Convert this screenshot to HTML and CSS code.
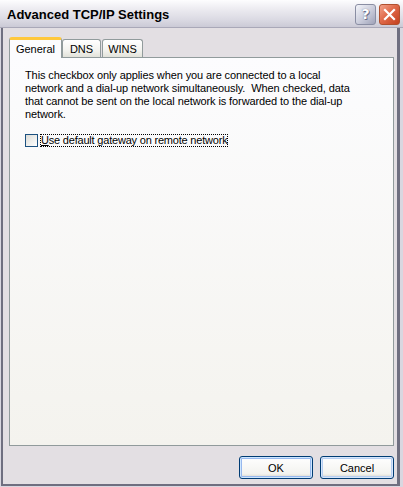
FILE: index.html
```html
<!DOCTYPE html>
<html>
<head>
<meta charset="utf-8">
<title>Advanced TCP/IP Settings</title>
<link rel="stylesheet" href="styles.css">
</head>
<body>
<div class="window">
  <div class="titlebar">
    <span class="caption">Advanced TCP/IP Settings</span>
    <div class="caption-buttons">
      <button class="cap-btn help" aria-label="Help"><span>?</span></button>
      <button class="cap-btn close" aria-label="Close">
        <svg width="13" height="13" viewBox="0 0 13 13"><path d="M2 2 L11 11 M11 2 L2 11" stroke="#fff" stroke-width="2.2" stroke-linecap="square"/></svg>
      </button>
    </div>
  </div>
  <div class="client">
    <div class="tabs">
      <div class="tab active tab-general">General</div>
      <div class="tab tab-dns">DNS</div>
      <div class="tab tab-wins">WINS</div>
    </div>
    <div class="panel">
      <p class="desc">This checkbox only applies when you are connected to a local network and a dial-up network simultaneously.&nbsp; When checked, data that cannot be sent on the local network is forwarded to the dial-up network.</p>
      <label class="check">
        <span class="box"></span>
        <span class="focus"><u>U</u>se default gateway on remote network</span>
      </label>
    </div>
    <div class="actions">
      <button class="btn default">OK</button>
      <button class="btn">Cancel</button>
    </div>
  </div>
</div>
</body>
</html>
```

FILE: styles.css
```css
html, body {
  margin: 0;
  padding: 0;
  background: #e3dfe3;
}

.window {
  width: 403px;
  height: 487px;
  box-sizing: border-box;
  display: flex;
  flex-direction: column;
  font-family: "Liberation Sans", Arial, sans-serif;
  font-size: 11px;
  color: #000;
  background: #d9d7e0;
}

/* caption bar, silver theme */
.titlebar {
  height: 28px;
  flex: none;
  box-sizing: border-box;
  display: flex;
  align-items: center;
  justify-content: space-between;
  padding: 0 3px 0 7px;
  background: linear-gradient(#fdfdfe 0%, #eeedf2 30%, #dcdbe4 70%, #cbcad6 100%);
  border-bottom: 1px solid #a9a8b8;
}

.caption {
  font-family: "Liberation Sans", Arial, sans-serif;
  font-weight: bold;
  font-size: 13px;
  color: #000;
  padding-top: 1px;
}

.caption-buttons {
  display: flex;
  gap: 3px;
  padding-top: 1px;
}

.cap-btn {
  width: 21px;
  height: 21px;
  padding: 0;
  border-radius: 3px;
  display: flex;
  align-items: center;
  justify-content: center;
  cursor: default;
}

.cap-btn.help {
  border: 1px solid #8a8ea3;
  background: linear-gradient(135deg, #f4f5fa 0%, #c9cbda 55%, #9fa2b8 100%);
}

.cap-btn.help span {
  font-family: "DejaVu Sans", sans-serif;
  font-weight: bold;
  font-size: 14px;
  color: #fff;
  text-shadow: 0 0 1px #5a5e78, 1px 1px 0 #6e7290;
  line-height: 1;
}

.cap-btn.close {
  border: 1px solid #b0502f;
  background: linear-gradient(135deg, #f2a38c 0%, #e06a4a 45%, #c4401e 100%);
}

/* outer frame: light line, dark line, then the dialog face */
.client {
  flex: 1;
  display: flex;
  flex-direction: column;
  padding: 9px 3px 5px 6px;
  margin: 0 3px 1px 1px;
  border-left: 2px solid #6f6f80;
  border-right: 3px solid #6f6f80;
  border-bottom: 2px solid #6f6f80;
  background: #e3dfe3;
}

.tabs {
  display: flex;
  align-items: flex-end;
  height: 20px;
  position: relative;
  z-index: 1;
}

.tab {
  height: 18px;
  box-sizing: border-box;
  padding-top: 3px;
  text-align: center;
  border: 1px solid #919b9c;
  border-bottom: none;
  border-radius: 3px 3px 0 0;
  background: linear-gradient(#ffffff, #f3f3ef 60%, #e2e2da);
  line-height: 13px;
}

.tab-general { width: 53px; }
.tab-dns { width: 39px; }
.tab-wins { width: 41px; margin-left: 1px; }

.tab.active {
  height: 21px;
  padding-top: 3px;
  background: #fcfcfe;
  border-top: 3px solid #ffc83c;
  margin-bottom: -1px;
}

.panel {
  flex: 1;
  border: 1px solid #919b9c;
  background: linear-gradient(#fcfcfe, #f4f3ee);
  padding: 11px 15px 0 15px;
  letter-spacing: -0.1px;
}

.desc {
  margin: 0;
  width: 332px;
  line-height: 13px;
}

.check {
  display: flex;
  align-items: center;
  margin-top: 13px;
  gap: 2px;
}

.box {
  width: 11px;
  height: 11px;
  border: 1px solid #1c5180;
  background: linear-gradient(135deg, #dcdcd7, #ffffff);
}

.focus {
  outline: 1px dotted #000;
  outline-offset: -1px;
  padding: 0 1px;
  line-height: 13px;
  letter-spacing: -0.2px;
}

.actions {
  display: flex;
  justify-content: flex-end;
  gap: 7px;
  padding-top: 10px;
}

.btn {
  width: 74px;
  height: 23px;
  font-family: "Liberation Sans", Arial, sans-serif;
  font-size: 11px;
  color: #000;
  border: 1px solid #003c74;
  border-radius: 3px;
  background: linear-gradient(#ffffff, #f3f3ef 80%, #d6d0c5);
  box-shadow: inset 0 0 0 1px #d6e6fb, inset 0 0 0 2px #b7cef1;
  padding: 0;
}

.btn.default {
  box-shadow: inset 0 0 0 1px #cee7ff, inset 0 0 0 2px #97b8ee;
}
```
